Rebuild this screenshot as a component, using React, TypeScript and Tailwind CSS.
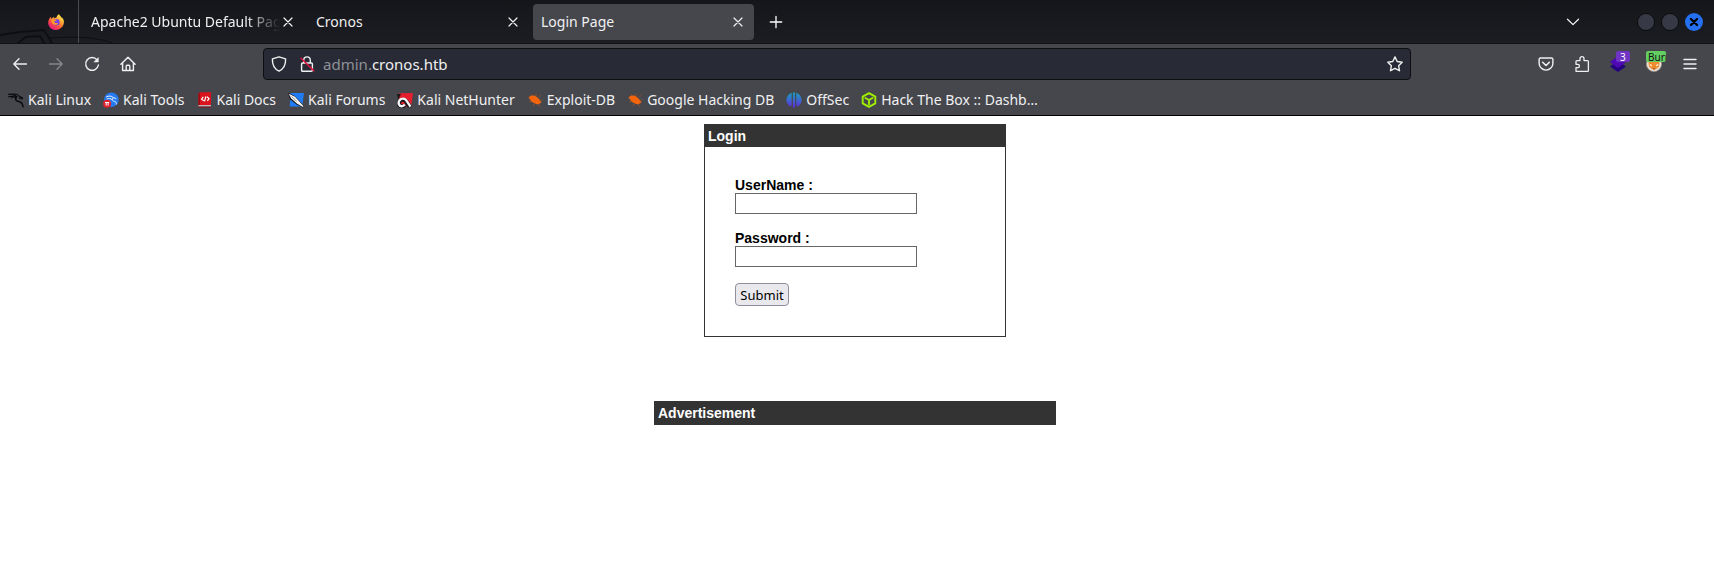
import type { ReactNode } from "react";

type IconProps = { children: ReactNode; className?: string };

function Icon({ children, className = "size-4" }: IconProps) {
  return (
    <svg viewBox="0 0 16 16" fill="none" stroke="currentColor" strokeWidth="1.25" strokeLinecap="round" strokeLinejoin="round" className={`shrink-0 ${className}`} aria-hidden="true">
      {children}
    </svg>
  );
}

const CloseIcon = () => (
  <Icon><path d="M4 4l8 8M12 4l-8 8" strokeWidth="1.2" /></Icon>
);

const FirefoxIcon = () => (
  <svg viewBox="0 0 16 16" className="size-4" aria-hidden="true">
    <defs>
      <linearGradient id="fxBody" x1="0.85" y1="0.05" x2="0.2" y2="0.95">
        <stop offset="0" stopColor="#fff44f" />
        <stop offset="0.35" stopColor="#ffa436" />
        <stop offset="0.65" stopColor="#ff4f3e" />
        <stop offset="1" stopColor="#e31587" />
      </linearGradient>
    </defs>
    <path fill="url(#fxBody)" d="M15.4 5.4c-.4-.9-1-1.7-1.7-2.2.2.5.4.9.4 1.3C13.200 2.700 11.800 2 11 .300c-2 1-2.500 2.700-2.400 3.300-.8 0-1.700.3-2.300.8A2.800 2.800 0 0 1 6.100 2.800C4.900 3.300 4 4.200 3.400 4.900c-.4-.5-.4-1.900-.3-2.200C2.300 3.200 1.200 4.600.7 6c-.5 1.300-.7 3-.3 4.600A7.700 7.700 0 0 0 8 16c4.400 0 7.900-3.500 7.900-7.900 0-.9-.2-1.900-.5-2.700z" />
    <circle cx="8.300" cy="8.300" r="3.300" fill="#7542e5" />
    <path fill="#ff9a2b" d="M3.400 4.900c1-.3 2.200.1 2.700.5.900-.2 1.900 0 2.700.5-.4.900-1.600 1-2.100 1.200-.6.300-.4 1.300.2 1.700 1 .7 2.200-.2 3.200.2-.6 1.900-3 2.400-4.700 1.200C3.900 9.200 2.700 7 3.400 4.900z" />
  </svg>
);

const BackIcon = () => (
  <Icon><path d="M14.400 8H1.800M7 2.800L1.800 8 7 13.200" strokeWidth="1.400" /></Icon>
);
const ForwardIcon = () => (
  <Icon><path d="M1.600 8h12.600M9 2.800L14.200 8 9 13.200" strokeWidth="1.400" /></Icon>
);
const ReloadIcon = () => (
  <Icon>
    <path d="M13.100 3.900A6.400 6.400 0 1 0 14.400 9" strokeWidth="1.400" />
    <path d="M14.600 1v5.200H9.400z" fill="currentColor" stroke="none" />
  </Icon>
);
const HomeIcon = () => (
  <Icon>
    <path d="M.9 8.300L8 1.200l7.100 7.100M2.600 6.800v7.700h10.800V6.800" strokeWidth="1.400" />
    <path d="M6.200 14.300v-4.100a1 1 0 0 1 1-1h1.600a1 1 0 0 1 1 1v4.100" strokeWidth="1.400" />
  </Icon>
);
const ShieldIcon = () => (
  <Icon><path d="M8 .800l6.600 2.100c.200 5.300-1.500 9.900-6.600 12.300C2.900 12.800 1.200 8.200 1.400 2.900z" strokeWidth="1.400" /></Icon>
);
const LockIcon = () => (
  <Icon>
    <path d="M4.700 7V4.200a3.300 3.300 0 0 1 6.600 0V7M3.600 7h8.800a1 1 0 0 1 1 1v6.200a1 1 0 0 1-1 1H3.600a1 1 0 0 1-1-1V8a1 1 0 0 1 1-1z" strokeWidth="1.400" />
    <path d="M2 2.200l12.800 12.600" stroke="#e2103f" strokeWidth="1.500" />
  </Icon>
);
const StarIcon = () => (
  <Icon><path d="M8 .9l2.200 4.600 5 .7-3.600 3.500.9 5L8 12.300l-4.500 2.400.9-5L.8 6.200l5-.7z" strokeWidth="1.400" /></Icon>
);
const PocketIcon = () => (
  <Icon>
    <path d="M2.400 2h11.200a1.300 1.300 0 0 1 1.300 1.300v3.900a6.900 6.900 0 0 1-13.800 0V3.300A1.300 1.300 0 0 1 2.400 2z" strokeWidth="1.400" />
    <path d="M4.700 6.300L8 9.500l3.300-3.200" strokeWidth="1.600" />
  </Icon>
);
const PuzzleIcon = () => (
  <Icon>
    <path d="M2 15.300V11.600h1.800a1.600 1.600 0 0 0 0-3.300H2V5.500a.9.900 0 0 1 .9-.9H6V2.700a2 2 0 0 1 4 0v1.900h3.500a.9.900 0 0 1 .9.900v8.900a.9.900 0 0 1-.9.900z" strokeWidth="1.300" />
  </Icon>
);
const MenuIcon = () => (
  <Icon><path d="M2 3.500h12M2 8h12M2 12.500h12" strokeWidth="1.400" /></Icon>
);

const DragonShape = ({ color }: { color: string }) => (
  <g stroke={color} fill="none" strokeLinecap="round">
    <path d="M.8 2.300C4 1.600 7.200 3 8.700 5" strokeWidth="1.300" />
    <path d="M.6 4.800c3-.8 5.600-.3 7.600 1.300" strokeWidth="1.100" />
    <path d="M4.500 2.600C7 1.300 10 2.600 11.500 4.400l3 1.300" strokeWidth="1.100" />
    <path d="M8.600 4.600C6.300 7.200 8 9 10.700 9.400c2.700.4 4 2 4.300 5.400" strokeWidth="1.500" />
    <path d="M11.200 4.700l3.600 1.800-.9.800-2.700-1.200M5 4.800l-1.500 1.400" strokeWidth="1" />
  </g>
);

const KaliLinuxIcon = () => (
  <svg viewBox="0 0 16 16" className="size-4 shrink-0" aria-hidden="true"><DragonShape color="#08090b" /></svg>
);
const KaliToolsIcon = () => (
  <svg viewBox="0 0 16 16" className="size-4 shrink-0" aria-hidden="true">
    <circle cx="8.400" cy="7.700" r="7.300" fill="#267bf0" />
    <path d="M3.500 4.800c2.500-1.300 5-.9 6.800.8l2.600.9M4 7c2-.9 3.800-.6 5 .6M10.300 5.600C8.300 7.500 9.500 8.900 11.300 9.300c1.500.4 2.100 1.300 2.200 2.700" stroke="#e8f1ff" strokeWidth="1" fill="none" strokeLinecap="round" />
    <circle cx="4.100" cy="11.800" r="4" fill="#e0202c" />
    <path d="M2 10.500h4.200M3.200 10.700v2.900M5.100 10.700v2.900" stroke="#fff" strokeWidth="1" />
  </svg>
);
const KaliDocsIcon = () => (
  <svg viewBox="0 0 16 16" className="size-4 shrink-0" aria-hidden="true">
    <path d="M1.500 1.500L3 .3h11v13H1.500z" fill="#d9141c" />
    <path d="M1.500 1.500L3 .3v13H1.500z" fill="#9d0b12" />
    <path d="M1.500 13.300H14v1.200H1.500z" fill="#e8e8ea" />
    <path d="M1.500 14.500H14v1.200H1.500z" fill="#7b1a24" />
    <path d="M6.300 4.800L4.600 7.200l2.200 1.700M8.900 4.300L7.500 9.300M10 4.800l2 1.800-1.600 2.300" stroke="#fff" strokeWidth="1.200" fill="none" />
  </svg>
);
const KaliForumsIcon = () => (
  <svg viewBox="0 0 16 16" className="size-4 shrink-0" aria-hidden="true">
    <path d="M2.500 1H16l-1.800 13.500H1.800z" fill="#1f7cf5" />
    <path d="M0 .8l6.500 3L15.800 13.600 15.400 15.800 8.500 12.600 2 7.300z" fill="#17191e" />
    <path d="M.8 1.700l6.200 3 8 8.700.4 1.900-6.200-3.500-6-5.300z" fill="#f2f2f2" />
    <path d="M3.500 4.500l5.200 4.800" stroke="#777" strokeWidth=".7" />
  </svg>
);
const NetHunterIcon = () => (
  <svg viewBox="0 0 16 16" className="size-4 shrink-0" aria-hidden="true">
    <path d="M1.800 1.300L16 1l-1.800 13.800H1.500z" fill="#e51f2d" />
    <path d="M0 2h4L1.200 7.500M8.500 6.500l6.700 7.200-1.700 2L8 11z" fill="#16171b" />
    <path d="M12.700 14.500L9 9.300C7.700 7.500 5 7.300 3.200 8.500c-2.500 1.800-1.400 5.800 1.400 5.900 1.800 0 2.700-.9 3.300-2" stroke="#15161a" strokeWidth="4.200" fill="none" />
    <path d="M13.500 14.600L9.300 8.400C7.600 6.300 4.500 6 2.700 8.100c-2.200 2.700-.6 6.300 2.100 6.200 1.400 0 2.300-.8 3-1.700" stroke="#f5f5f5" strokeWidth="2.400" fill="none" />
  </svg>
);
const BugIcon = () => (
  <svg viewBox="0 0 16 16" className="size-4 shrink-0" aria-hidden="true">
    <path d="M4 2.300l1 2M9 1.600v3M1 6h3M2 10l3-.8M12 4.500l2-1M13 8.500l2.500-.7M7 12l-.7 2M12 13l.8 1.800" stroke="#a65224" strokeWidth=".7" />
    <path d="M2.300 4.500c2.600-1.600 5.300-1.300 7.400.4 2 1.500 3 2.600 3.500 4.100.4.500 1.200.8 1.500 1.400-.5.600-1.600.6-2.100 1.200-.8 1.400-2.200 1-3.400.5C6.500 11.200 4 9.600 3.100 7.500c-.6-.7-1.400-1.800-.8-3z" fill="#f2640d" />
  </svg>
);
const OffSecIcon = () => (
  <svg viewBox="0 0 16 16" className="size-4 shrink-0" aria-hidden="true">
    <defs>
      <linearGradient id="osFill" gradientUnits="userSpaceOnUse" x1="0" y1="0" x2="0" y2="16">
        <stop offset="0" stopColor="#12a5bd" />
        <stop offset="0.5" stopColor="#3c68d0" />
        <stop offset="1" stopColor="#6425e2" />
      </linearGradient>
    </defs>
    <path fill="url(#osFill)" d="M5.700.7v12L4.800 14.500C2 13.300.4 11 .4 8S2.300 1.900 5.700.7zM6.900.4h2.200v15.200H6.900zM10.300.7c3.400 1.200 5.300 3.900 5.300 7.300s-1.600 5.300-4.400 6.500l-.9-1.800z" />
  </svg>
);
const HackTheBoxIcon = () => (
  <svg viewBox="0 0 16 16" className="size-4 shrink-0" fill="none" stroke="#9fef00" strokeWidth="1.900" strokeLinejoin="round" strokeLinecap="round" aria-hidden="true">
    <path d="M8 1.100l6.300 3.500v6.800L8 14.900l-6.300-3.500V4.600z" />
    <path d="M4.400 6L8 8l3.600-2M8 8v4.200" />
  </svg>
);
const LayersIcon = () => (
  <svg viewBox="0 0 16 16" className="size-4" aria-hidden="true">
    <path d="M8 5l8 5.500L8 16l-8-5.500z" fill="#24047e" />
    <path d="M8 0l8 6-8 6-8-6z" fill="#4e08b5" />
  </svg>
);
const BurpFoxIcon = () => (
  <svg viewBox="0 0 16 16" className="size-4" aria-hidden="true">
    <circle cx="8" cy="8" r="7.600" fill="#e9e2d8" stroke="#9b9085" strokeWidth=".8" />
    <path d="M2.300 4h11.400l-.6 6.500-2.400 2.200H5.300l-2.400-2.200z" fill="#ef8d2f" />
    <path d="M3.800 8.600l2 1.200M12.200 8.600l-2 1.200" stroke="#fff3e2" strokeWidth="1.300" />
    <path d="M5.800 12.600L8 11.600l2.200 1L8 14.200z" fill="#c9691d" />
  </svg>
);

const tabs = [
  { title: "Apache2 Ubuntu Default Page", active: false, fade: true },
  { title: "Cronos", active: false, fade: false },
  { title: "Login Page", active: true, fade: false },
];

const bookmarks = [
  { label: "Kali Linux", icon: <KaliLinuxIcon /> },
  { label: "Kali Tools", icon: <KaliToolsIcon /> },
  { label: "Kali Docs", icon: <KaliDocsIcon /> },
  { label: "Kali Forums", icon: <KaliForumsIcon /> },
  { label: "Kali NetHunter", icon: <NetHunterIcon /> },
  { label: "Exploit-DB", icon: <BugIcon /> },
  { label: "Google Hacking DB", icon: <BugIcon /> },
  { label: "OffSec", icon: <OffSecIcon /> },
  { label: "Hack The Box :: Dashb…", icon: <HackTheBoxIcon /> },
];

function ToolButton({ label, children, dim = false }: { label: string; children: ReactNode; dim?: boolean }) {
  return (
    <button type="button" aria-label={label} className={`relative flex h-8 w-9 shrink-0 items-center justify-center ${dim ? "text-[#85878c]" : "text-[#f0f0f1]"}`}>
      {children}
    </button>
  );
}

function TabStrip() {
  return (
    <div className="relative flex h-11 items-center border-b border-[#111216] bg-linear-to-b from-[#15161a] to-[#1c1d22]">
      <svg viewBox="0 0 160 44" className="pointer-events-none absolute bottom-0 left-0 h-11 w-40" fill="none" stroke="#0e0f12" aria-hidden="true">
        <path d="M0 36l20-3 24-2 8 13M18 44l8-6 14-1 4 7" strokeWidth="2" />
        <path d="M50 39c28-2 50 0 62 5" strokeWidth="1" />
      </svg>
      <button type="button" aria-label="Firefox View" className="relative flex h-full w-[79px] shrink-0 items-center justify-end border-r border-[#4a4b50] pr-3.5">
        <FirefoxIcon />
      </button>
      <div className="relative ml-1 flex min-w-0 gap-1">
        {tabs.map((tab) => (
          <div key={tab.title} className={`flex h-9 w-[221px] min-w-0 items-center rounded pr-2 pl-2 ${tab.active ? "bg-[#45474d]" : ""}`}>
            <button type="button" className={`min-w-0 flex-1 overflow-hidden text-left whitespace-nowrap text-[#f0f0f1] ${tab.fade ? "[mask-image:linear-gradient(to_right,#000_82%,transparent)]" : ""}`}>
              {tab.title}
            </button>
            <button type="button" aria-label={`Close ${tab.title}`} className="text-[#f0f0f1]"><CloseIcon /></button>
          </div>
        ))}
      </div>
      <button type="button" aria-label="New tab" className="ml-3.5 flex size-4 items-center justify-center text-white">
        <Icon><path d="M8 2.300v11.400M2.300 8h11.400" strokeWidth="1.300" /></Icon>
      </button>
      <div className="ml-auto flex items-center pr-[11px]">
        <button type="button" aria-label="List all tabs" className="mr-14 text-[#f0f0f1]">
          <Icon><path d="M2.500 5.200L8 10.600l5.500-5.400" strokeWidth="1.300" /></Icon>
        </button>
        <div className="flex gap-1.5">
          <button type="button" aria-label="Minimize" className="size-[18px] rounded-full border border-[#0b0c0e] bg-[#373a46]" />
          <button type="button" aria-label="Maximize" className="size-[18px] rounded-full border border-[#0b0c0e] bg-[#373a46]" />
          <button type="button" aria-label="Close window" className="flex size-[18px] items-center justify-center rounded-full bg-[#2470f0] text-black">
            <Icon className="size-3.5"><path d="M4.500 4.500l7 7M11.500 4.500l-7 7" strokeWidth="2.600" /></Icon>
          </button>
        </div>
      </div>
    </div>
  );
}

function NavBar() {
  return (
    <div className="flex h-10 items-center pr-1.5 pl-0.5">
      <div className="flex">
        <ToolButton label="Back"><BackIcon /></ToolButton>
        <ToolButton label="Forward" dim><ForwardIcon /></ToolButton>
        <ToolButton label="Reload"><ReloadIcon /></ToolButton>
        <ToolButton label="Home"><HomeIcon /></ToolButton>
      </div>
      <div className="flex-[3]" />
      <div className="flex h-8 min-w-0 flex-[29] items-center rounded border border-[#0d0e11] bg-[#282a36] px-[7px] text-[#f0f0f1]">
        <button type="button" aria-label="Tracking protection"><ShieldIcon /></button>
        <button type="button" aria-label="Connection not secure" className="ml-3"><LockIcon /></button>
        <a href="#" className="ml-2 min-w-0 flex-1 truncate text-[15px]">
          <span className="text-[#8f9198]">admin.</span>cronos.htb
        </a>
        <button type="button" aria-label="Bookmark this page"><StarIcon /></button>
      </div>
      <div className="flex-[3]" />
      <div className="flex">
        <ToolButton label="Save to Pocket"><PocketIcon /></ToolButton>
        <ToolButton label="Extensions"><PuzzleIcon /></ToolButton>
        <ToolButton label="Layers">
          <LayersIcon />
          <span className="absolute top-[3px] right-1.5 flex h-[11px] w-3.5 items-center justify-center rounded-xs bg-[#6f34c4] text-[10px] leading-none text-white">3</span>
        </ToolButton>
        <ToolButton label="Burp proxy">
          <BurpFoxIcon />
          <span className="absolute top-[3px] right-1.5 flex h-[11px] w-5 items-center overflow-hidden rounded-xs bg-[#63cf63] pl-0.5 text-[10px] leading-none text-[#111]">Burp</span>
        </ToolButton>
        <ToolButton label="Menu"><MenuIcon /></ToolButton>
      </div>
    </div>
  );
}

function Bookmarks() {
  return (
    <nav className="flex h-8 items-center gap-3 overflow-hidden border-b border-black px-2">
      {bookmarks.map((item) => (
        <a key={item.label} href="#" className="flex items-center gap-1 whitespace-nowrap text-[#f0f0f1]">
          {item.icon}
          {item.label}
        </a>
      ))}
    </nav>
  );
}

function Field({ id, label, type }: { id: string; label: string; type: string }) {
  return (
    <div className="mb-4">
      <label htmlFor={id} className="block font-bold">{label}</label>
      <input id={id} type={type} className="block h-[21px] w-[182px] border border-[#666] bg-white px-1" />
    </div>
  );
}

export default function App() {
  return (
    <div className="min-h-screen bg-white">
      <header className="bg-[#45474d] font-['Noto_Sans',sans-serif] text-[14px] leading-5">
        <TabStrip />
        <NavBar />
        <Bookmarks />
      </header>
      <main className="flex flex-col items-center pt-2 pr-1 font-['Liberation_Sans',sans-serif] text-[14px] leading-4 text-black">
        <section className="w-[302px] border border-[#333]">
          <h1 className="bg-[#333] p-[3px] font-bold text-white">Login</h1>
          <form className="p-[30px]" onSubmit={(event) => event.preventDefault()}>
            <Field id="username" label="UserName :" type="text" />
            <Field id="password" label="Password :" type="password" />
            <button type="submit" className="block h-[23px] w-[54px] rounded border border-[#8f8f9d] bg-[#e9e9ed] font-['Noto_Sans',sans-serif] text-[13px]">
              Submit
            </button>
          </form>
        </section>
        <section className="mt-16 w-[402px] bg-[#333] p-1">
          <h2 className="font-bold text-white">Advertisement</h2>
        </section>
      </main>
    </div>
  );
}
